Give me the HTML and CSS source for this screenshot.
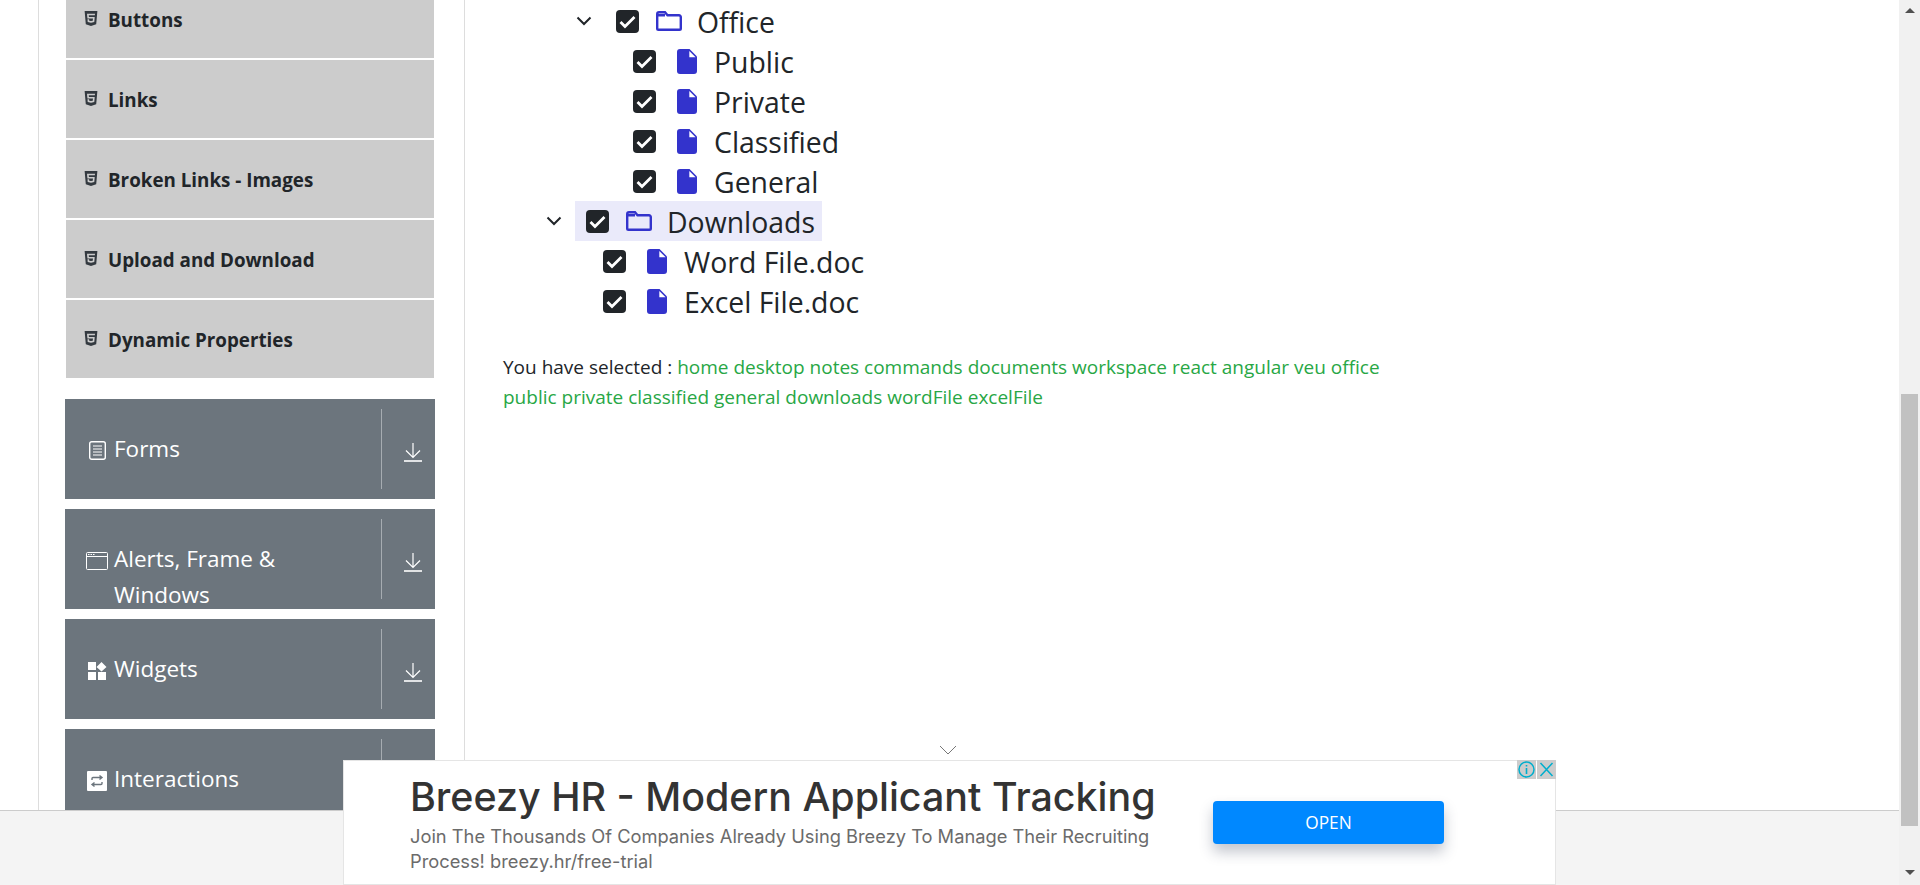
FILE: index.html
```html
<!DOCTYPE html>
<html lang="en">
<head>
    <meta charset="UTF-8">
    <title>Check Box</title>
    <meta name="viewport" content="width=device-width, initial-scale=1.0">
    <link rel="stylesheet" href="styles.css">
</head>
<body>
    <svg class="sprite" width="0" height="0">
        <symbol id="i-html5" viewBox="0 0 384 512"><path d="M0 32l34.9 395.8L191.5 480l157.6-52.2L384 32H0zm308.2 127.9H124.4l4.1 49.4h175.6l-13.6 148.4-97.9 27v.3h-1.1l-98.7-27.3-6-75.8h47.7L138 320l53.5 14.5 53.7-14.5 6-62.2H84.3L71.5 112.2h241.1l-4.4 47.7z"/></symbol>
        <symbol id="i-down" viewBox="0 0 18 19"><path d="M9 0v14M2 7.5l7 7 7-7" fill="none" stroke="currentColor" stroke-width="1.2"/><path d="M0 18h18" stroke="currentColor" stroke-width="1.6"/></symbol>
        <symbol id="i-check" viewBox="0 0 23 23"><path d="M4.500 12l4.500 4.500 9.500-9.500" fill="none" stroke="#fff" stroke-width="2.800"/></symbol>
        <symbol id="i-chevron" viewBox="0 0 16 10"><path d="M1.5 1.5L8 8l6.500-6.500" fill="none" stroke="#212529" stroke-width="2"/></symbol>
        <symbol id="i-folder" viewBox="0 0 26 20"><path d="M1.200 17.500V3a1.800 1.800 0 0 1 1.800-1.800h6l2.500 3H23a1.800 1.800 0 0 1 1.800 1.800v11.500a1.300 1.300 0 0 1-1.300 1.300h-21a1.300 1.300 0 0 1-1.300-1.300z" fill="none" stroke="#33c" stroke-width="2.400"/><path d="M1 3h8v2.500H1z" fill="#33c"/></symbol>
        <symbol id="i-file" viewBox="0 0 20 25"><path d="M3 0h9.500L20 7.500V22a3 3 0 0 1-3 3H3a3 3 0 0 1-3-3V3a3 3 0 0 1 3-3z" fill="#33c"/><path d="M12.300 2l6.300 6.200h-6.300z" fill="#fff"/></symbol>
    </svg>

    <div class="page">
        <div class="layout">
            <aside class="sidebar">
                <ul class="menu-list">
                    <li class="menu-item"><svg class="html5"><use href="#i-html5"/></svg>Buttons</li>
                    <li class="menu-item"><svg class="html5"><use href="#i-html5"/></svg>Links</li>
                    <li class="menu-item"><svg class="html5"><use href="#i-html5"/></svg>Broken Links - Images</li>
                    <li class="menu-item"><svg class="html5"><use href="#i-html5"/></svg>Upload and Download</li>
                    <li class="menu-item"><svg class="html5"><use href="#i-html5"/></svg>Dynamic Properties</li>
                </ul>

                <div class="group">
                    <div class="group-title">
                        <span class="group-icon">
                            <svg width="17" height="19" viewBox="0 0 17 19"><rect x=".7" y=".7" width="15.600" height="17.600" rx="2" fill="none" stroke="#fff" stroke-width="1.400"/><path d="M4 5h9M4 8h9M4 11h9M4 14h9" stroke="#fff"/></svg>
                        </span>
                        <span>Forms</span>
                    </div>
                    <span class="group-divider"></span>
                    <span class="group-arrow"><svg class="down"><use href="#i-down"/></svg></span>
                </div>
                <div class="group">
                    <div class="group-title">
                        <span class="group-icon">
                            <svg width="22" height="18" viewBox="0 0 22 18"><rect x=".5" y=".5" width="21" height="17" rx="1" fill="none" stroke="#fff"/><path d="M.5 4.500h21" stroke="#fff"/><path d="M2 2.500h1.500M4.500 2.500H6M7 2.500h1.500" stroke="#fff"/></svg>
                        </span>
                        <span>Alerts, Frame &amp; Windows</span>
                    </div>
                    <span class="group-divider"></span>
                    <span class="group-arrow"><svg class="down"><use href="#i-down"/></svg></span>
                </div>
                <div class="group">
                    <div class="group-title">
                        <span class="group-icon">
                            <svg width="19" height="18" viewBox="0 0 19 18"><path d="M0 0h8v8H0zM0 10h8v8H0zM10 10h8v8h-8zM13.500 0l5 5-5 4.500-5-4.500z" fill="#fff"/></svg>
                        </span>
                        <span>Widgets</span>
                    </div>
                    <span class="group-divider"></span>
                    <span class="group-arrow"><svg class="down"><use href="#i-down"/></svg></span>
                </div>
                <div class="group">
                    <div class="group-title">
                        <span class="group-icon">
                            <svg width="20" height="20" viewBox="0 0 20 20"><rect width="20" height="20" rx="1" fill="#fff"/><path d="M5 9V7.500a1 1 0 0 1 1-1h8M12.500 4.500l2.500 2-2.500 2M15 11v1.500a1 1 0 0 1-1 1H6M7.500 11.500l-2.500 2 2.500 2" fill="none" stroke="#6c757d" stroke-width="1.400"/></svg>
                        </span>
                        <span>Interactions</span>
                    </div>
                    <span class="group-divider"></span>
                    <span class="group-arrow"><svg class="down"><use href="#i-down"/></svg></span>
                </div>
            </aside>

            <main class="main">
                <ol class="tree">
                    <li>
                        <ol class="tree tree-sub">
                            <li class="row">
                                <svg class="toggle"><use href="#i-chevron"/></svg>
                                <span class="node">
                                    <span class="box"><svg><use href="#i-check"/></svg></span>
                                    <svg class="folder"><use href="#i-folder"/></svg>
                                    <span class="name">Office</span>
                                </span>
                            </li>
                            <li>
                                <ol class="tree tree-sub">
                                    <li class="row leaf"><span class="box"><svg><use href="#i-check"/></svg></span><svg class="file"><use href="#i-file"/></svg><span class="name">Public</span></li>
                                    <li class="row leaf"><span class="box"><svg><use href="#i-check"/></svg></span><svg class="file"><use href="#i-file"/></svg><span class="name">Private</span></li>
                                    <li class="row leaf"><span class="box"><svg><use href="#i-check"/></svg></span><svg class="file"><use href="#i-file"/></svg><span class="name">Classified</span></li>
                                    <li class="row leaf"><span class="box"><svg><use href="#i-check"/></svg></span><svg class="file"><use href="#i-file"/></svg><span class="name">General</span></li>
                                </ol>
                            </li>
                        </ol>
                    </li>
                    <li class="row">
                        <svg class="toggle"><use href="#i-chevron"/></svg>
                        <span class="node node-clicked">
                            <span class="box"><svg><use href="#i-check"/></svg></span>
                            <svg class="folder"><use href="#i-folder"/></svg>
                            <span class="name">Downloads</span>
                        </span>
                    </li>
                    <li>
                        <ol class="tree tree-sub">
                            <li class="row leaf"><span class="box"><svg><use href="#i-check"/></svg></span><svg class="file"><use href="#i-file"/></svg><span class="name">Word File.doc</span></li>
                            <li class="row leaf"><span class="box"><svg><use href="#i-check"/></svg></span><svg class="file"><use href="#i-file"/></svg><span class="name">Excel File.doc</span></li>
                        </ol>
                    </li>
                </ol>

                <p class="result"><span>You have selected :</span>
                    <span class="picked">home</span> <span class="picked">desktop</span> <span class="picked">notes</span>
                    <span class="picked">commands</span> <span class="picked">documents</span> <span class="picked">workspace</span>
                    <span class="picked">react</span> <span class="picked">angular</span> <span class="picked">veu</span>
                    <span class="picked">office</span> <span class="picked">public</span> <span class="picked">private</span>
                    <span class="picked">classified</span> <span class="picked">general</span> <span class="picked">downloads</span>
                    <span class="picked">wordFile</span> <span class="picked">excelFile</span>
                </p>
            </main>
        </div>

        <footer class="footer"></footer>

        <div class="ad">
            <svg class="ad-chevron" width="18" height="10" viewBox="0 0 18 10"><path d="M1 1l8 8 8-8" fill="none" stroke="#777" stroke-width="1"/></svg>
            <div class="ad-copy">
                <div class="ad-title">Breezy HR - Modern Applicant Tracking</div>
                <div class="ad-text">Join The Thousands Of Companies Already Using Breezy To Manage Their Recruiting Process! breezy.hr/free-trial</div>
            </div>
            <div class="ad-button">OPEN</div>
            <div class="ad-tools">
                <span class="ad-tool"><svg width="17" height="17" viewBox="0 0 17 17"><circle cx="8.500" cy="8.500" r="7.500" fill="none" stroke="#00aecd" stroke-width="1.500"/><path d="M8.500 4v1.500M8.500 7v6" stroke="#00aecd" stroke-width="1.600"/></svg></span>
                <span class="ad-tool"><svg width="15" height="15" viewBox="0 0 15 15"><path d="M1.500 1l12 13M13.500 1l-12 13" fill="none" stroke="#00aecd" stroke-width="1.500"/></svg></span>
            </div>
        </div>
    </div>

    <div class="scrollbar">
        <span class="scroll-arrow scroll-up"></span>
        <span class="scroll-thumb"></span>
        <span class="scroll-arrow scroll-down"></span>
    </div>
</body>
</html>
```
FILE: styles.css
```css
html, body {
    height: 100%;
    margin: 0;
    padding: 0;
    overflow: hidden;
}
body {
    display: flex;
    background: #fff;
    color: #212529;
    font-family: 'Open Sans', 'Noto Sans', Arial, sans-serif;
}
.sprite {
    position: absolute;
}
.page {
    position: relative;
    flex: 1;
    height: 885px;
    overflow: hidden;
}
.layout {
    display: flex;
    height: 100%;
}

/* Linke Spalte */
.sidebar {
    width: 427px;
    margin-left: 38px;
    padding: 0 29px 0 26px;
    box-sizing: border-box;
    border-left: 1px solid #ddd;
    border-right: 1px solid #ddd;
}
.menu-list {
    list-style: none;
    margin: -20px 0 21px 0;
    padding: 0 1px;
    display: flex;
    flex-direction: column;
    gap: 2px;
}
.menu-item {
    display: flex;
    align-items: center;
    height: 78px;
    box-sizing: border-box;
    padding: 2px 0 0 18px;
    background: #ccc;
    font-size: 18.8px;
    font-weight: 700;
}
.html5 {
    width: 14px;
    height: 17px;
    margin: -3px 10px 0 0;
    fill: #343a40;
}
.group {
    display: flex;
    height: 100px;
    margin-bottom: 10px;
    background: #6c757d;
    color: #fff;
    overflow: hidden;
}
.group-title {
    flex: 1;
    display: flex;
    padding: 32px 20px 0 17px;
    font-size: 22.5px;
    line-height: 36px;
}
.group-icon {
    flex: none;
    display: flex;
    justify-content: center;
    align-items: center;
    width: 30px;
    height: 38px;
    margin-right: 2px;
    padding-top: 1px;
    box-sizing: border-box;
}
.group-divider {
    width: 1px;
    margin: 10px 0;
    background: rgba(255,255,255,0.4);
}
.group-arrow {
    width: 53px;
    padding: 44px 0 0 22px;
    box-sizing: border-box;
}
.down {
    display: block;
    width: 18px;
    height: 19px;
}

/* Baum */
.main {
    flex: 1;
    padding: 1px 0 0 38px;
}
.tree {
    list-style: none;
    margin: 0;
    padding: 0 0 0 43px;
}
.tree-sub {
    padding-left: 30px;
}
.row {
    display: flex;
    align-items: center;
    height: 40px;
}
.leaf {
    padding-left: 27px;
}
.toggle {
    flex: none;
    width: 16px;
    height: 10px;
    margin-right: 13px;
}
.node {
    display: flex;
    align-items: center;
    height: 40px;
    padding: 0 7px 0 11px;
}
.node-clicked {
    background: rgba(51,51,204,0.1);
}
.box {
    flex: none;
    width: 23px;
    height: 23px;
    border-radius: 4px;
    background: #212529;
}
.box svg {
    display: block;
    width: 23px;
    height: 23px;
}
.folder {
    flex: none;
    width: 26px;
    height: 20px;
    margin: 0 15px 0 17px;
}
.file {
    flex: none;
    width: 20px;
    height: 25px;
    margin: 0 17px 0 21px;
}
.name {
    padding-top: 2px;
    font-size: 28.4px;
    white-space: nowrap;
}
.result {
    width: 900px;
    margin: 32px 0 0 0;
    font-size: 19px;
    line-height: 29.500px;
}
.picked {
    color: #28a745;
}

/* Fusszeile und Werbung */
.footer {
    position: absolute;
    left: 0;
    right: 0;
    bottom: 0;
    height: 74px;
    background: #f4f4f4;
    border-top: 1px solid #ccc;
}
.ad {
    position: absolute;
    left: 343px;
    bottom: 0;
    width: 1213px;
    height: 125px;
    box-sizing: border-box;
    display: flex;
    align-items: flex-start;
    background: #fff;
    border: 1px solid #e5e5e5;
}
.ad-chevron {
    position: absolute;
    left: 595px;
    top: -16px;
}
.ad-copy {
    width: 869px;
    box-sizing: border-box;
    padding: 14px 50px 0 66px;
    color: #333;
}
.ad-title {
    font-family: Inter, 'Open Sans', sans-serif;
    font-size: 39.400px;
    font-weight: 500;
    line-height: 44px;
    white-space: nowrap;
}
.ad-text {
    margin-top: 5px;
    font-family: Inter, 'Open Sans', sans-serif;
    font-size: 18.300px;
    line-height: 25px;
    color: #6b6b6b;
}
.ad-button {
    width: 231px;
    height: 43px;
    margin-top: 40px;
    border-radius: 4px;
    background: #08f;
    color: #fff;
    font-size: 17.300px;
    line-height: 43px;
    text-align: center;
    box-shadow: 0 8px 14px rgba(40,50,80,0.28);
}
.ad-tools {
    position: absolute;
    top: -1px;
    right: -1px;
    display: flex;
    gap: 1px;
}
.ad-tool {
    display: flex;
    justify-content: center;
    align-items: center;
    width: 19px;
    height: 19px;
    background: #ccc;
}

/* Rollbalken */
.scrollbar {
    flex: none;
    width: 21px;
    height: 885px;
    display: flex;
    flex-direction: column;
    align-items: center;
    background: #f1f1f1;
    position: relative;
}
.scroll-arrow {
    width: 0;
    height: 0;
    border-left: 5px solid transparent;
    border-right: 5px solid transparent;
}
.scroll-up {
    margin-top: 8px;
    border-bottom: 5px solid #505050;
}
.scroll-thumb {
    width: 17px;
    height: 432px;
    margin-top: 381px;
    background: #c1c1c1;
}
.scroll-down {
    margin-top: 44px;
    border-top: 5px solid #505050;
}
```
